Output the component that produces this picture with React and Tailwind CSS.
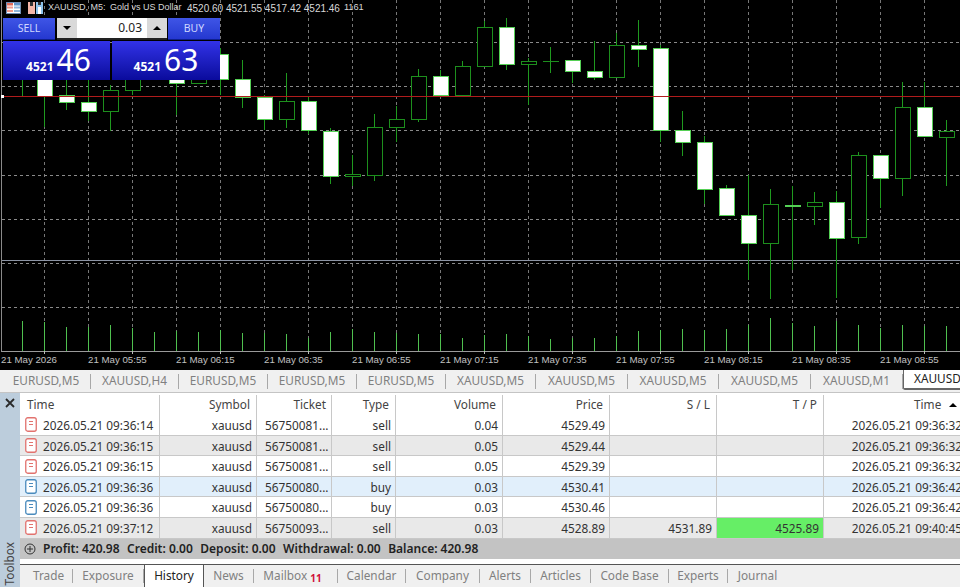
const candles = [
  // [top, bottom, wickTop, wickBottom, white]
  [70, 78, 60, 96, 1],
  [60, 96, 55, 127, 1],
  [95, 102.5, 80, 110, 1],
  [102, 111.5, 80, 121, 1],
  [90, 111.5, 85, 131, 0],
  [75, 90.5, 70, 95, 0],
  [50, 70, 45, 75, 1],
  [70, 83, 60, 115, 1],
  [60, 83, 55, 83, 0],
  [54, 79, 48, 95, 1],
  [79, 97, 60, 108, 1],
  [97, 119, 95, 130, 1],
  [101, 119, 73, 128, 0],
  [101, 130.5, 96, 134, 1],
  [131, 176, 128, 184, 1],
  [174.5, 176, 155, 186, 0],
  [127, 175, 114, 181, 0],
  [119, 127, 106, 142, 0],
  [76, 119, 69, 122, 0],
  [76.5, 95, 70, 96, 1],
  [66, 95, 61, 96, 0],
  [27, 66.5, 21, 67, 0],
  [27.5, 64.5, 18, 70, 1],
  [61, 64.5, 58, 105, 0],
  [61, 61.5, 47, 73, 0],
  [60.5, 71.5, 60, 83, 1],
  [71.5, 77, 41, 80, 1],
  [45, 77.5, 33, 78, 0],
  [45, 49, 20, 67, 1],
  [48, 130, 45, 142, 1],
  [130, 142, 111, 156, 1],
  [142, 189, 136, 204, 1],
  [188, 215.5, 185, 216, 1],
  [215, 243, 175, 280, 1],
  [204, 243, 189, 299, 0],
  [205, 206, 186, 270, 1],
  [202, 206.5, 192, 225, 0],
  [202.5, 238.5, 191, 298, 1],
  [155, 237.5, 152, 244, 0],
  [155, 178, 155, 208, 1],
  [107, 178.5, 82, 196, 0],
  [107, 136.5, 82, 137, 1],
  [131, 137, 120, 186, 0],
];

const volumes = [
  321, 322, 327, 327, 325, 328, 332, 331, 332, 330, 333, 333, 334, 338, 332, 329,
  332, 333, 334, 334, 338, 335, 334, 336, 339, 338, 338, 336, 331, 330, 329, 330,
  329, 325, 318, 323, 326, 321, 325, 328, 325, 326, 326,
];

const gridX = [44.5, 88.5, 132.5, 176.5, 220.5, 264.5, 308.5, 352.5, 396.5, 440.5, 484.5, 528.5, 572.5, 616.5, 660.5, 704.5, 748.5, 792.5, 836.5, 880.5, 924.5];
const gridY = [42.5, 86.5, 130.5, 175.5, 219.5, 263.5, 307.5];
const ticks = [
  [1, "21 May 2026"],
  [88, "21 May 05:55"],
  [176, "21 May 06:15"],
  [264, "21 May 06:35"],
  [352, "21 May 06:55"],
  [440, "21 May 07:15"],
  [528, "21 May 07:35"],
  [616, "21 May 07:55"],
  [704, "21 May 08:15"],
  [792, "21 May 08:35"],
  [880, "21 May 08:55"],
];

const chartTabs = [
  ["EURUSD,M5", "w-[89px]"],
  ["XAUUSD,H4", "w-[88px]"],
  ["EURUSD,M5", "w-[89px]"],
  ["EURUSD,M5", "w-[89px]"],
  ["EURUSD,M5", "w-[89px]"],
  ["XAUUSD,M5", "w-[90px]"],
  ["XAUUSD,M5", "w-[92px]"],
  ["XAUUSD,M5", "w-[91px]"],
  ["XAUUSD,M5", "w-[92px]"],
  ["XAUUSD,M1", "w-[92px]"],
];

const bottomTabs = [
  ["Trade", "w-[53px] pl-[5px]"],
  ["Exposure", "w-[71px]"],
  ["History", "w-[60px]", true],
  ["News", "w-[50px]"],
  ["Mailbox", "w-[84px] pr-[6px]"],
  ["Calendar", "w-[68px]"],
  ["Company", "w-[74px]"],
  ["Alerts", "w-[51px]"],
  ["Articles", "w-[60px]"],
  ["Code Base", "w-[78px]"],
  ["Experts", "w-[59px]"],
  ["Journal", "w-[59px] border-r-0"],
];

const summary = ["Profit: 420.98", "Credit: 0.00", "Deposit: 0.00", "Withdrawal: 0.00", "Balance: 420.98"];

const rows = [
  { open: "2026.05.21 09:36:14", ticket: "56750081...", type: "sell", vol: "0.04", price: "4529.49", close: "2026.05.21 09:36:32", bg: "bg-white" },
  { open: "2026.05.21 09:36:15", ticket: "56750081...", type: "sell", vol: "0.05", price: "4529.44", close: "2026.05.21 09:36:32", bg: "bg-[#e9e9e9]" },
  { open: "2026.05.21 09:36:15", ticket: "56750081...", type: "sell", vol: "0.05", price: "4529.39", close: "2026.05.21 09:36:32", bg: "bg-white" },
  { open: "2026.05.21 09:36:36", ticket: "56750080...", type: "buy", vol: "0.03", price: "4530.41", close: "2026.05.21 09:36:42", bg: "bg-[#e1effb]" },
  { open: "2026.05.21 09:36:36", ticket: "56750080...", type: "buy", vol: "0.03", price: "4530.46", close: "2026.05.21 09:36:42", bg: "bg-white" },
  { open: "2026.05.21 09:37:12", ticket: "56750093...", type: "sell", vol: "0.03", price: "4528.89", sl: "4531.89", tp: "4525.89", close: "2026.05.21 09:40:45", bg: "bg-[#e9e9e9]" },
];

const cols = "grid grid-cols-[140px_97px_75px_64px_107px_107px_107px_107px_142px]";

function Chart() {
  return (
    <svg width="960" height="370" className="block" shapeRendering="crispEdges">
      <rect x="1" y="0" width="1" height="351" fill="#8a8a8a" />
      {gridX.map((x) => (
        <line key={x} x1={x} x2={x} y1="0" y2="351" stroke="#777" strokeDasharray="3 3" />
      ))}
      {gridY.map((y) => (
        <line key={y} x1="2" x2="960" y1={y} y2={y} stroke="#8a8a8a" strokeDasharray="3 3" />
      ))}
      <line x1="2" x2="960" y1="260.5" y2="260.5" stroke="#8c94a4" />
      {candles.map(([top, bottom, wt, wb, white], i) => {
        const x = 22.5 + 22 * i;
        return (
          <g key={i}>
            <line x1={x} x2={x} y1={wt} y2={wb} stroke="#1f9a1f" />
            <rect
              x={x - 7.5}
              y={top}
              width="15"
              height={bottom - top}
              fill={white ? "#fff" : "#000"}
              stroke={white ? "#55d055" : "#1d8f1d"}
            />
          </g>
        );
      })}
      <line x1="2" x2="960" y1="96.5" y2="96.5" stroke="#b01c1c" />
      <rect x="1" y="95" width="3" height="3" fill="#fff" />
      {volumes.map((y, i) => {
        const x = 22.5 + 22 * i;
        return <line key={i} x1={x} x2={x} y1={y} y2="351" stroke="#4fc04f" />;
      })}
      <rect x="1" y="351" width="959" height="1" fill="#9a9a9a" />
      {gridX.filter((_, i) => i % 2 === 0).map((x) => (
        <line key={x} x1={x} x2={x} y1="351" y2="354" stroke="#bbb" />
      ))}
      {ticks.map(([x, label]) => (
        <text key={x} x={x} y="363" fill="#c0c0c0" fontSize="9.7" fontFamily="'Liberation Sans', sans-serif" shapeRendering="auto">
          {label}
        </text>
      ))}
    </svg>
  );
}

function WindowIcons() {
  return (
    <div className="flex items-center gap-[7px]">
      <svg width="15" height="12" viewBox="0 0 15 12">
        <rect x="0.5" y="0.5" width="14" height="11" fill="#fff" stroke="#6f8fb5" />
        <rect x="1" y="1" width="6" height="2.5" fill="#e06a5a" />
        <rect x="8" y="1" width="6" height="2.5" fill="#5c93c9" />
        <rect x="1" y="4.5" width="6" height="2" fill="#ef9a8c" />
        <rect x="8" y="4.5" width="6" height="2" fill="#8fb6dc" />
        <rect x="1" y="8" width="6" height="2" fill="#ef9a8c" />
        <rect x="8" y="8" width="6" height="2" fill="#8fb6dc" />
      </svg>
      <svg width="15" height="12" viewBox="0 0 15 12">
        <rect x="0" y="0" width="7" height="12" fill="#f4b6a8" />
        <rect x="2" y="0" width="3" height="4" fill="#333" />
        <rect x="8" y="0" width="7" height="12" fill="#8fc3ea" />
        <rect x="10" y="0" width="3" height="3" fill="#333" />
        <rect x="10" y="5" width="3" height="7" fill="#fff" />
      </svg>
    </div>
  );
}

function TradePanel() {
  return (
    <div className="absolute left-[3px] top-[18px] w-[217px] text-white">
      <div className="flex h-[22px]">
        <div className="flex w-[52px] items-center justify-center border-b border-[#0e1f8c] bg-gradient-to-b from-[#3f55e6] to-[#2538d0] text-[10.5px] text-[#cfd6ff]">
          SELL
        </div>
        <div className="ml-[2px] flex w-[110px] border-b-2 border-[#222] bg-white text-[12px] text-[#222]">
          <div className="flex w-[20px] items-center justify-center bg-[#d9d9d9]">
            <span className="h-0 w-0 border-x-[4px] border-t-[4px] border-x-transparent border-t-black" />
          </div>
          <div className="flex flex-1 items-center justify-end pr-[5px]">0.03</div>
          <div className="flex w-[20px] items-center justify-center bg-[#d9d9d9]">
            <span className="h-0 w-0 border-x-[4px] border-b-[4px] border-x-transparent border-b-black" />
          </div>
        </div>
        <div className="ml-[1px] flex w-[52px] items-center justify-center border-b border-[#0e1f8c] bg-gradient-to-b from-[#3f55e6] to-[#2538d0] text-[10.5px] text-[#cfd6ff]">
          BUY
        </div>
      </div>
      <div className="mt-[1px] flex h-[39px] gap-[2px]">
        <div className="flex w-[107px] items-baseline justify-center gap-[3px] bg-gradient-to-b from-[#3232e8] to-[#0a0a9c] pl-[4px]">
          <span className="text-[12px] font-bold">4521</span>
          <span className="text-[30px] leading-[37px]">46</span>
        </div>
        <div className="flex w-[108px] items-baseline justify-center gap-[3px] bg-gradient-to-b from-[#3232e8] to-[#0a0a9c]">
          <span className="text-[12px] font-bold">4521</span>
          <span className="text-[30px] leading-[37px]">63</span>
        </div>
      </div>
    </div>
  );
}

function OrderIcon({ buy }) {
  const c = buy ? "#4a8bbd" : "#e2726e";
  return (
    <svg width="12" height="15" viewBox="0 0 12 15" className="shrink-0">
      <rect x="0.75" y="0.75" width="10.5" height="13.5" rx="2" fill="#fff" stroke={c} strokeWidth="1.3" />
      <path d="M4 4.5h4M4 7.5h4" stroke={c} strokeWidth="1.2" />
    </svg>
  );
}

export default function App() {
  return (
    <div className="relative flex h-[587px] w-[960px] flex-col overflow-hidden bg-[#f0f0f0] font-['Noto_Sans',sans-serif] text-[11.8px] text-[#333]">
      <div className="relative h-[370px] shrink-0 bg-black">
        <Chart />
        <div className="absolute left-[6px] top-[1px] flex h-[14px] items-center whitespace-nowrap font-['Liberation_Sans',sans-serif] text-[10px] text-[#d8d8d8]">
          <WindowIcons />
          <span className="ml-[5px] w-[62px] text-[9px]">XAUUSD, M5:</span>
          <span className="w-[77px] text-[9px]">Gold vs US Dollar</span>
          <span>4520.60 4521.55 4517.42 4521.46</span>
          <span className="ml-[4px] text-[9.2px]">1161</span>
        </div>
        <TradePanel />
      </div>

      <div className="flex h-[23px] shrink-0 items-center border-b border-[#c4c4c4] bg-[#f0f0f0] pl-[2px] text-[#808080]">
        {chartTabs.map(([label, w], i) => (
          <div key={i} className={`flex h-[15px] shrink-0 items-center justify-center border-r border-[#a8a8a8] last:border-r-0 ${w}`}>
            {label}
          </div>
        ))}
        <div className="-mt-[3px] flex h-[21px] w-[80px] shrink-0 items-center rounded-bl-[2px] border-b-2 border-l border-[#666] bg-white pl-[10px] text-[#222]">
          XAUUSD,M5
        </div>
      </div>

      <div className="flex min-h-0 flex-1">
        <div className="flex w-[20px] shrink-0 flex-col items-center justify-between bg-[#bccddc] pb-[2px]">
          <svg width="10" height="10" viewBox="0 0 10 10" className="mt-[5px]">
            <path d="M1 1l8 8M9 1l-8 8" stroke="#2a2a2a" strokeWidth="1.8" />
          </svg>
          <span className="rotate-180 text-[#444] [writing-mode:vertical-rl]">Toolbox</span>
        </div>

        <div className="flex min-w-0 flex-1 flex-col overflow-hidden">
          <div className={`${cols} h-[22px] shrink-0 bg-white pt-[2px] text-[#444]`}>
            <div className="flex items-center border-r border-[#c8c8c8] pl-[7px]">Time</div>
            <div className="flex items-center justify-end border-r border-[#c8c8c8] pr-[6px]">Symbol</div>
            <div className="flex items-center justify-end border-r border-[#c8c8c8] pr-[5px]">Ticket</div>
            <div className="flex items-center justify-end border-r border-[#c8c8c8] pr-[6px]">Type</div>
            <div className="flex items-center justify-end border-r border-[#c8c8c8] pr-[6px]">Volume</div>
            <div className="flex items-center justify-end border-r border-[#c8c8c8] pr-[6px]">Price</div>
            <div className="flex items-center justify-end border-r border-[#c8c8c8] pr-[6px]">S / L</div>
            <div className="flex items-center justify-end border-r border-[#c8c8c8] pr-[6px]">T / P</div>
            <div className="flex items-center pl-[90px]">
              Time
              <span className="ml-[8px] h-0 w-0 border-x-[4px] border-b-[4px] border-x-transparent border-b-black" />
            </div>
          </div>
          {rows.map((r, i) => (
            <div key={i} className={`${cols} ${r.bg} h-[20.6px] shrink-0 border-b border-[#c8c8c8]`}>
              <div className="flex items-center gap-[6px] border-r border-[#c8c8c8] pl-[5px]">
                <OrderIcon buy={r.type === "buy"} />
                <span className="pt-[2px]">{r.open}</span>
              </div>
              <div className="flex items-center justify-end border-r border-[#c8c8c8] pr-[4px] pt-[2px]">xauusd</div>
              <div className="flex items-center border-r border-[#c8c8c8] pl-[8px] pt-[2px]">{r.ticket}</div>
              <div className="flex items-center justify-end border-r border-[#c8c8c8] pr-[4px] pt-[2px]">{r.type}</div>
              <div className="flex items-center justify-end border-r border-[#c8c8c8] pr-[4px] pt-[2px]">{r.vol}</div>
              <div className="flex items-center justify-end border-r border-[#c8c8c8] pr-[4px] pt-[2px]">{r.price}</div>
              <div className="flex items-center justify-end border-r border-[#c8c8c8] pr-[4px] pt-[2px]">{r.sl}</div>
              <div className={`flex items-center justify-end border-r border-[#c8c8c8] pr-[4px] pt-[2px] ${r.tp ? "bg-[#66ee66]" : ""}`}>{r.tp}</div>
              <div className="flex items-center justify-end whitespace-nowrap pr-[4px] pt-[2px]">{r.close}</div>
            </div>
          ))}
          <div className="flex h-[20.4px] shrink-0 items-center bg-[#c3c3c3] pl-[4px] text-[12px] font-semibold text-[#222]">
            <svg width="12" height="12" viewBox="0 0 12 12" className="mr-[7px] shrink-0">
              <circle cx="6" cy="6" r="5" fill="none" stroke="#333" />
              <path d="M3 6h6M6 3v6" stroke="#333" />
            </svg>
            <div className="flex gap-[7.5px] whitespace-nowrap">
              {summary.map((s) => (
                <span key={s}>{s}</span>
              ))}
            </div>
          </div>
          <div className="h-[5px] shrink-0 bg-white" />
          <div className="flex h-[23px] shrink-0 items-stretch border-t border-[#555] bg-[#f0f0f0] text-[#808080]">
            {bottomTabs.map(([label, w, active], i) =>
              active ? (
                <div key={i} className={`-mt-px flex items-center justify-center border-x border-t border-[#555] bg-white text-[#222] ${w}`}>
                  {label}
                </div>
              ) : (
                <div key={i} className={`my-[4px] flex items-center justify-center border-r border-[#a8a8a8] ${w}`}>
                  {label}
                  {label === "Mailbox" && (
                    <span className="ml-[3px] mt-[5px] text-[10px] font-bold text-[#d0103a]">11</span>
                  )}
                </div>
              )
            )}
          </div>
        </div>
      </div>
    </div>
  );
}
